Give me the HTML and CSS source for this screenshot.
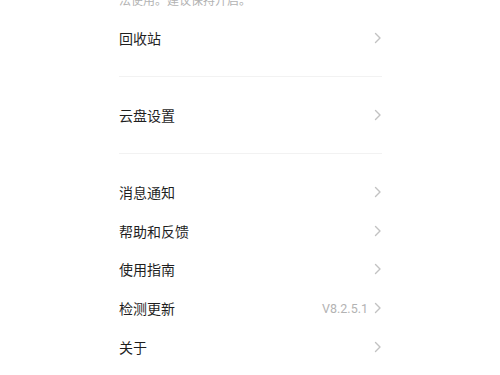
FILE: index.html
```html
<!DOCTYPE html>
<html lang="zh">
<head>
<meta charset="utf-8">
<link rel="stylesheet" href="styles.css">
</head>
<body>
<div class="page">
  <p class="note">法使用。建议保持开启。</p>
  <div class="row"><span class="label">回收站</span><span class="right"><svg class="chev" viewBox="0 0 8 12"><path d="M1.5 1.5 L6 6 L1.5 10.5"/></svg></span></div>
  <div class="sep"></div>
  <div class="row"><span class="label">云盘设置</span><span class="right"><svg class="chev" viewBox="0 0 8 12"><path d="M1.5 1.5 L6 6 L1.5 10.5"/></svg></span></div>
  <div class="sep"></div>
  <div class="row"><span class="label">消息通知</span><span class="right"><svg class="chev" viewBox="0 0 8 12"><path d="M1.5 1.5 L6 6 L1.5 10.5"/></svg></span></div>
  <div class="row"><span class="label">帮助和反馈</span><span class="right"><svg class="chev" viewBox="0 0 8 12"><path d="M1.5 1.5 L6 6 L1.5 10.5"/></svg></span></div>
  <div class="row"><span class="label">使用指南</span><span class="right"><svg class="chev" viewBox="0 0 8 12"><path d="M1.5 1.5 L6 6 L1.5 10.5"/></svg></span></div>
  <div class="row"><span class="label">检测更新</span><span class="right"><span class="value">V8.2.5.1</span><svg class="chev" viewBox="0 0 8 12"><path d="M1.5 1.5 L6 6 L1.5 10.5"/></svg></span></div>
  <div class="row"><span class="label">关于</span><span class="right"><svg class="chev" viewBox="0 0 8 12"><path d="M1.5 1.5 L6 6 L1.5 10.5"/></svg></span></div>
</div>
</body>
</html>
```
FILE: styles.css
```css
html, body {
  margin: 0;
  padding: 0;
  background: #ffffff;
  overflow: hidden;
}
body {
  font-family: "Noto Sans CJK SC", "Noto Sans", sans-serif;
}
.page {
  padding: 0 118px 0 119px;
  display: flex;
  flex-direction: column;
}
.note {
  margin: -7px 0 12px 0;
  font-size: 12px;
  line-height: 14px;
  color: #b3b3b3;
}
.row {
  height: 38.75px;
  display: flex;
  align-items: center;
  justify-content: space-between;
}
.label {
  font-size: 14px;
  color: #1f1f1f;
  line-height: 1;
}
.right {
  display: flex;
  align-items: center;
  gap: 6px;
}
.value {
  font-family: "Roboto", "Noto Sans", sans-serif;
  font-size: 12.5px;
  color: #b3b3b3;
}
.chev {
  width: 8px;
  height: 12px;
  fill: none;
  stroke: #c2c2c2;
  stroke-width: 1.4;
  stroke-linecap: round;
  stroke-linejoin: round;
}
.sep {
  height: 1px;
  background: #f2f2f2;
  margin: 18px 0 19px 0;
}
```
